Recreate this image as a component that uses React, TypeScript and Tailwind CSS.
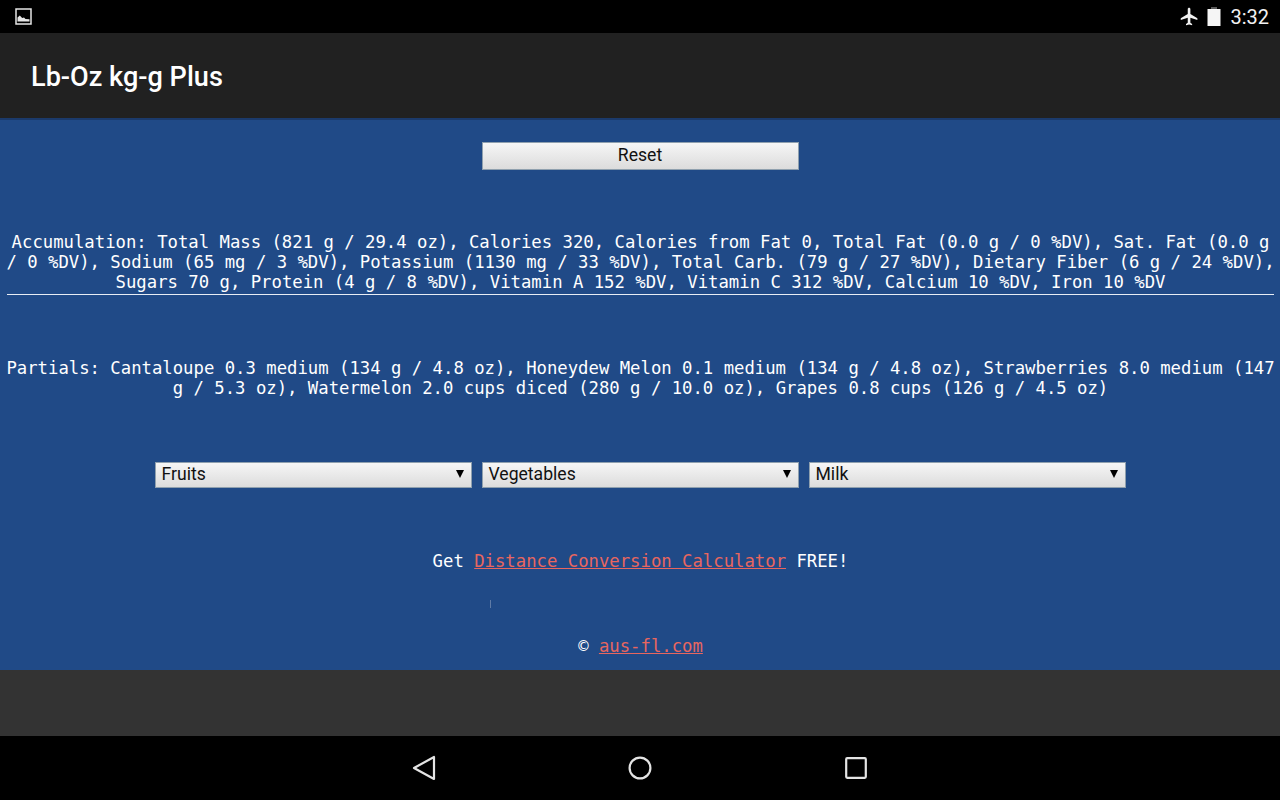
function ImageNotificationIcon() {
  return (
    <svg width="17" height="17" viewBox="0 0 17 17" className="text-[#e6e6e6]">
      <rect x="1" y="1" width="15" height="15" fill="none" stroke="currentColor" strokeWidth="1.5" />
      <path d="M2.5 13.5 V9.5 L4.8 7.5 L7.2 10 L9 9.5 L10.5 11 L14.5 11.3 V13.5 Z" fill="currentColor" />
    </svg>
  );
}

function AirplaneIcon() {
  return (
    <svg width="21" height="21" viewBox="0 0 24 24" fill="#f2f2f2">
      <path d="M21 16v-2l-8-5V3.5C13 2.67 12.33 2 11.5 2S10 2.67 10 3.5V9l-8 5v2l8-2.5V19l-2 1.5V22l3.5-1 3.5 1v-1.5L13 19v-5.5l8 2.5z" />
    </svg>
  );
}

function BatteryIcon() {
  return (
    <svg width="14" height="20" viewBox="0 0 14 20">
      <rect x="4" y="0" width="6" height="3" fill="#5a5a5a" />
      <rect x="0.5" y="2" width="13" height="17" fill="#f5f5f5" />
    </svg>
  );
}

function NavButtons() {
  return (
    <div className="h-16 bg-black flex items-center justify-center gap-[192px] pb-[1px]">
      <svg width="24" height="26" viewBox="0 0 24 26" fill="none" stroke="#e4e4e4" strokeWidth="2.2" strokeLinejoin="round">
        <path d="M22 2 V24 L2 13 Z" />
      </svg>
      <svg width="24" height="24" viewBox="0 0 24 24" fill="none" stroke="#e4e4e4" strokeWidth="2.2">
        <circle cx="12" cy="12" r="10.4" />
      </svg>
      <svg width="24" height="24" viewBox="0 0 24 24" fill="none" stroke="#e4e4e4" strokeWidth="2.2" strokeLinejoin="round">
        <rect x="2.2" y="2.2" width="19.6" height="19.6" rx="1" />
      </svg>
    </div>
  );
}

function FoodSelect({ label }: { label: string }) {
  return (
    <div className="relative w-[317px] h-[26px] flex items-center pl-[6px] border border-[#8fa0ae] bg-gradient-to-b from-[#f6f6f6] to-[#dcdcdc] text-[17.6px] text-[#111] font-['Roboto',sans-serif]">
      <span className="-translate-y-px">{label}</span>
      <span className="absolute right-[7px] top-[7px] w-0 h-0 border-x-4 border-x-transparent border-t-8 border-t-black" />
    </div>
  );
}

export default function App() {
  return (
    <div className="w-[1280px] h-[800px] flex flex-col overflow-hidden font-['DejaVu_Sans_Mono',monospace]">
      <div className="h-[33px] bg-black flex items-center justify-between pl-[15px] pr-[11px] font-['Roboto',sans-serif]">
        <ImageNotificationIcon />
        <div className="flex items-center text-[#f2f2f2] text-[20px]">
          <span className="flex"><AirplaneIcon /></span>
          <span className="ml-[7px] mr-[9px] flex"><BatteryIcon /></span>
          <span>3:32</span>
        </div>
      </div>

      <div className="h-[85px] bg-[#212121] flex items-center pl-[31px] pt-[3px] text-white text-[27.1px] font-medium font-['Roboto',sans-serif]">
        Lb-Oz kg-g Plus
      </div>

      <main className="h-[552px] bg-[#204a87] border-t-2 border-t-[#1b3a6b] text-white text-[17.28px] leading-5 text-center pl-[6px] pr-[5px]">
        <div className="flex justify-center pt-[22px] -ml-[1px]">
          <button className="w-[317px] h-[28px] border border-[#8fa0ae] bg-gradient-to-b from-[#f6f6f6] to-[#dcdcdc] text-[17.6px] text-[#111] font-['Roboto',sans-serif]">
            <span className="block -translate-y-px">Reset</span>
          </button>
        </div>

        <p className="mt-[62px]">
          Accumulation: Total Mass (821 g / 29.4 oz), Calories 320, Calories from Fat 0, Total Fat (0.0 g / 0 %DV), Sat. Fat (0.0 g / 0 %DV), Sodium (65 mg / 3 %DV), Potassium (1130 mg / 33 %DV), Total Carb. (79 g / 27 %DV), Dietary Fiber (6 g / 24 %DV), Sugars 70 g, Protein (4 g / 8 %DV), Vitamin A 152 %DV, Vitamin C 312 %DV, Calcium 10 %DV, Iron 10 %DV
        </p>
        <hr className="mt-[2px] mx-[1px] border-t border-[#e8edf5]" />

        <p className="mt-[63px]">
          Partials: Cantaloupe 0.3 medium (134 g / 4.8 oz), Honeydew Melon 0.1 medium (134 g / 4.8 oz), Strawberries 8.0 medium (147 g / 5.3 oz), Watermelon 2.0 cups diced (280 g / 10.0 oz), Grapes 0.8 cups (126 g / 4.5 oz)
        </p>

        <div className="mt-[64px] flex justify-center gap-[10px] text-left -ml-[1px]">
          <FoodSelect label="Fruits" />
          <FoodSelect label="Vegetables" />
          <FoodSelect label="Milk" />
        </div>

        <p className="mt-[63px]">
          Get <a href="#" className="text-[#e8665f] underline">Distance Conversion Calculator</a> FREE!
        </p>

        <div className="ml-[484px] mt-[29px] w-px h-[8px] bg-[#5f7ba6]" />

        <p className="mt-[28px]">
          © <a href="#" className="text-[#e8665f] underline">aus-fl.com</a>
        </p>
      </main>

      <div className="h-[66px] bg-[#333333]" />
      <NavButtons />
    </div>
  );
}
